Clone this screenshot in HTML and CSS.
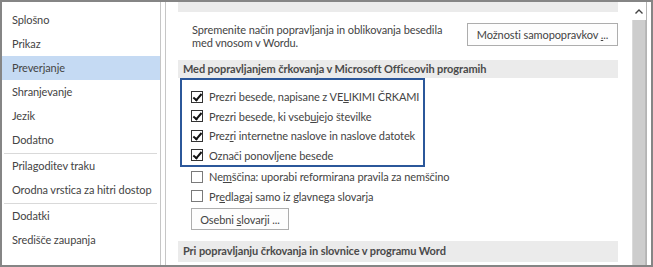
FILE: index.html
```html
<!DOCTYPE html>
<html lang="sl">
<head>
    <meta charset="UTF-8">
    <title>Možnosti za Word - Preverjanje</title>
    <link rel="stylesheet" href="styles.css">
</head>
<body>
    <div class="dialog">
        <!-- Left navigation -->
        <ul class="nav">
            <li class="nav-item">Splošno</li>
            <li class="nav-item">Prikaz</li>
            <li class="nav-item selected">Preverjanje</li>
            <li class="nav-item">Shranjevanje</li>
            <li class="nav-item">Jezik</li>
            <li class="nav-item">Dodatno</li>
            <li class="nav-sep"></li>
            <li class="nav-item">Prilagoditev traku</li>
            <li class="nav-item">Orodna vrstica za hitri dostop</li>
            <li class="nav-sep"></li>
            <li class="nav-item">Dodatki</li>
            <li class="nav-item">Središče zaupanja</li>
        </ul>

        <!-- Right content panel -->
        <div class="panel">
            <div class="scroll-area">
                <div class="section-head cut"></div>

                <div class="autocorrect">
                    <p class="desc">Spremenite način popravljanja in oblikovanja besedila<br>med vnosom v Wordu.</p>
                    <button class="btn">Možnosti samopopravkov <u>.</u>..</button>
                </div>

                <div class="section-head">Med popravljanjem črkovanja v Microsoft Officeovih programih</div>

                <div class="highlight">
                    <label class="check-row"><span class="box checked"></span>Prezri besede, napisane z VE<u>L</u>IKIMI ČRKAMI</label>
                    <label class="check-row"><span class="box checked"></span>Prezri besede, ki vseb<u>u</u>jejo številke</label>
                    <label class="check-row"><span class="box checked"></span>Prez<u>r</u>i internetne naslove in naslove datotek</label>
                    <label class="check-row"><span class="box checked"></span>Označi ponovljene besede</label>
                </div>

                <div class="options">
                    <label class="check-row"><span class="box"></span>Ne<u>m</u>ščina: uporabi reformirana pravila za nemščino</label>
                    <label class="check-row"><span class="box"></span>Pr<u>e</u>dlagaj samo iz glavnega slovarja</label>
                    <button class="btn small">Osebni <u>s</u>lovarji ...</button>
                </div>

                <div class="section-head tall">Pri popravljanju črkovanja in slovnice v programu Word</div>
            </div>

            <div class="scrollbar">
                <div class="arrow">
                    <svg width="8" height="5" viewBox="0 0 8 5"><path d="M0.5 4.5 L4 1 L7.5 4.5" fill="none" stroke="#444" stroke-width="1.4"/></svg>
                </div>
                <div class="thumb"></div>
            </div>
        </div>
    </div>
</body>
</html>
```

FILE: styles.css
```css
* {
    box-sizing: border-box;
}

body {
    margin: 0;
    font-family: 'Lato', 'Liberation Sans', sans-serif;
    font-size: 11px;
    letter-spacing: -0.1px;
    color: #444;
    background-color: #ffffff;
}

.dialog {
    width: 653px;
    height: 267px;
    border: 2px solid #858585;
    display: flex;
    overflow: hidden;
}

/* navigation */
.nav {
    list-style: none;
    margin: 0;
    padding: 6px 0 0 0;
    width: 159px;
    flex-shrink: 0;
    border-right: 1px solid #c6c6c6;
}

.nav-item {
    height: 24px;
    line-height: 24px;
    padding-left: 10px;
    white-space: nowrap;
}

.nav-item.selected {
    background-color: #c5daf3;
}

.nav-sep {
    height: 1px;
    margin: 1px 3px 0 2px;
    background-color: #d9d9d9;
}

/* content */
.panel {
    margin-left: 4px;
    width: 482px;
    flex-shrink: 0;
    border-left: 1px solid #c6c6c6;
    border-right: 1px solid #b4b4b4;
    display: flex;
}

.scroll-area {
    flex: 1;
    padding: 0 14px 0 12px;
    overflow: hidden;
}

.section-head {
    height: 18px;
    line-height: 18px;
    padding-left: 5px;
    background-color: #ebebeb;
    font-weight: bold;
    color: #4a4a4a;
    white-space: nowrap;
}

.section-head.cut {
    height: 10px;
}

.section-head.tall {
    height: 21px;
    line-height: 20px;
    margin-top: 11px;
}

.autocorrect {
    display: flex;
    justify-content: space-between;
    align-items: flex-start;
    margin-top: 11px;
    margin-bottom: 11px;
    padding-left: 14px;
}

.desc {
    margin: 0;
    line-height: 13px;
    white-space: nowrap;
}

.btn {
    font-family: inherit;
    font-size: 11px;
    letter-spacing: -0.1px;
    color: #444;
    background-color: #fdfdfd;
    border: 1px solid #adadad;
    height: 23px;
    width: 151px;
    padding: 0 6px;
    white-space: nowrap;
}

.btn.small {
    margin-top: 2px;
    width: 98px;
    height: 22px;
}

.highlight {
    width: 245px;
    margin-left: 2px;
    border: 2px solid #2b579a;
    padding: 7px 0 0 9px;
    height: 89px;
}

.options {
    padding-left: 13px;
}

.check-row {
    display: flex;
    align-items: center;
    height: 19.5px;
    white-space: nowrap;
}

.box {
    width: 12px;
    height: 12px;
    margin-right: 6px;
    border: 1px solid #7a7a7a;
    background-color: #ffffff;
    flex-shrink: 0;
    position: relative;
}

.box.checked {
    border-color: #333;
}

.box.checked::after {
    content: '';
    position: absolute;
    left: 3px;
    top: 0px;
    width: 3px;
    height: 7px;
    border-right: 2px solid #111;
    border-bottom: 2px solid #111;
    transform: rotate(40deg);
}

/* scrollbar */
.scrollbar {
    width: 14px;
    flex-shrink: 0;
    display: flex;
    flex-direction: column;
}

.arrow {
    height: 18px;
    display: flex;
    justify-content: center;
    align-items: center;
}

.thumb {
    flex: 1;
    background-color: #cdcdcd;
    border-left: 1px solid #dadada;
    border-right: 1px solid #b9b9b9;
}
```
